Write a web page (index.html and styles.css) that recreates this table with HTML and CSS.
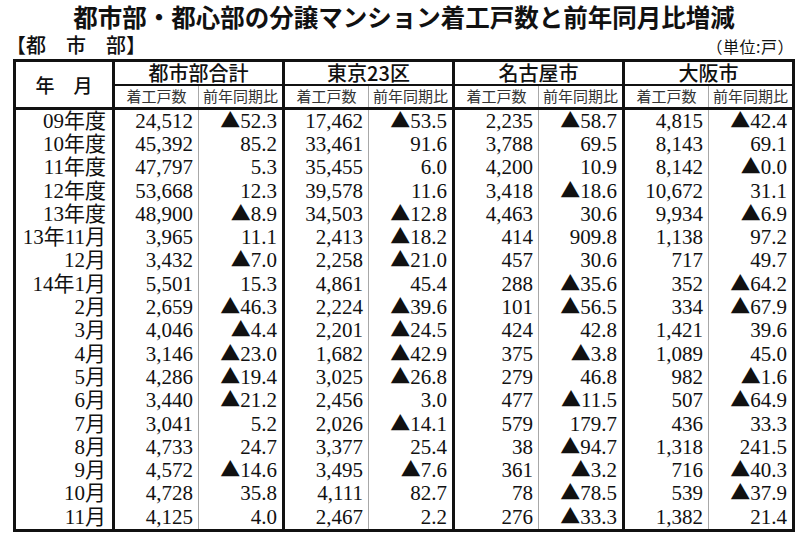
FILE: index.html
```html
<!DOCTYPE html>
<html lang="ja">
<head>
<meta charset="utf-8">
<title>都市部・都心部の分譲マンション着工戸数と前年同月比増減</title>
<link rel="stylesheet" href="styles.css">
</head>
<body>
<h1 class="title">都市部・都心部の分譲マンション着工戸数と前年同月比増減</h1>
<div class="sub">
  <span class="section">【都　市　部】</span>
  <span class="unit">（単位:戸）</span>
</div>
<table class="data">
  <colgroup>
    <col class="w-label">
    <col class="w-num"><col class="w-num"><col class="w-num"><col class="w-num">
    <col class="w-num"><col class="w-num"><col class="w-num"><col class="w-num">
  </colgroup>
  <thead>
    <tr class="h1">
      <th class="ym" rowspan="2">年　月</th>
      <th class="grp" colspan="2">都市部合計</th>
      <th class="grp" colspan="2">東京23区</th>
      <th class="grp" colspan="2">名古屋市</th>
      <th class="grp" colspan="2">大阪市</th>
    </tr>
    <tr class="h2">
      <th class="sh n">着工戸数</th><th class="sh r">前年同期比</th>
      <th class="sh n">着工戸数</th><th class="sh r">前年同期比</th>
      <th class="sh n">着工戸数</th><th class="sh r">前年同期比</th>
      <th class="sh n">着工戸数</th><th class="sh r">前年同期比</th>
    </tr>
  </thead>
  <tbody>
    <tr><td class="lb">09年度</td><td class="n">24,512</td><td class="r"><span class="tri">▲</span>52.3</td><td class="n">17,462</td><td class="r"><span class="tri">▲</span>53.5</td><td class="n">2,235</td><td class="r"><span class="tri">▲</span>58.7</td><td class="n">4,815</td><td class="r"><span class="tri">▲</span>42.4</td></tr>
    <tr><td class="lb">10年度</td><td class="n">45,392</td><td class="r">85.2</td><td class="n">33,461</td><td class="r">91.6</td><td class="n">3,788</td><td class="r">69.5</td><td class="n">8,143</td><td class="r">69.1</td></tr>
    <tr><td class="lb">11年度</td><td class="n">47,797</td><td class="r">5.3</td><td class="n">35,455</td><td class="r">6.0</td><td class="n">4,200</td><td class="r">10.9</td><td class="n">8,142</td><td class="r"><span class="tri">▲</span>0.0</td></tr>
    <tr><td class="lb">12年度</td><td class="n">53,668</td><td class="r">12.3</td><td class="n">39,578</td><td class="r">11.6</td><td class="n">3,418</td><td class="r"><span class="tri">▲</span>18.6</td><td class="n">10,672</td><td class="r">31.1</td></tr>
    <tr><td class="lb">13年度</td><td class="n">48,900</td><td class="r"><span class="tri">▲</span>8.9</td><td class="n">34,503</td><td class="r"><span class="tri">▲</span>12.8</td><td class="n">4,463</td><td class="r">30.6</td><td class="n">9,934</td><td class="r"><span class="tri">▲</span>6.9</td></tr>
    <tr><td class="lb">13年11月</td><td class="n">3,965</td><td class="r">11.1</td><td class="n">2,413</td><td class="r"><span class="tri">▲</span>18.2</td><td class="n">414</td><td class="r">909.8</td><td class="n">1,138</td><td class="r">97.2</td></tr>
    <tr><td class="lb">12月</td><td class="n">3,432</td><td class="r"><span class="tri">▲</span>7.0</td><td class="n">2,258</td><td class="r"><span class="tri">▲</span>21.0</td><td class="n">457</td><td class="r">30.6</td><td class="n">717</td><td class="r">49.7</td></tr>
    <tr><td class="lb">14年1月</td><td class="n">5,501</td><td class="r">15.3</td><td class="n">4,861</td><td class="r">45.4</td><td class="n">288</td><td class="r"><span class="tri">▲</span>35.6</td><td class="n">352</td><td class="r"><span class="tri">▲</span>64.2</td></tr>
    <tr><td class="lb">2月</td><td class="n">2,659</td><td class="r"><span class="tri">▲</span>46.3</td><td class="n">2,224</td><td class="r"><span class="tri">▲</span>39.6</td><td class="n">101</td><td class="r"><span class="tri">▲</span>56.5</td><td class="n">334</td><td class="r"><span class="tri">▲</span>67.9</td></tr>
    <tr><td class="lb">3月</td><td class="n">4,046</td><td class="r"><span class="tri">▲</span>4.4</td><td class="n">2,201</td><td class="r"><span class="tri">▲</span>24.5</td><td class="n">424</td><td class="r">42.8</td><td class="n">1,421</td><td class="r">39.6</td></tr>
    <tr><td class="lb">4月</td><td class="n">3,146</td><td class="r"><span class="tri">▲</span>23.0</td><td class="n">1,682</td><td class="r"><span class="tri">▲</span>42.9</td><td class="n">375</td><td class="r"><span class="tri">▲</span>3.8</td><td class="n">1,089</td><td class="r">45.0</td></tr>
    <tr><td class="lb">5月</td><td class="n">4,286</td><td class="r"><span class="tri">▲</span>19.4</td><td class="n">3,025</td><td class="r"><span class="tri">▲</span>26.8</td><td class="n">279</td><td class="r">46.8</td><td class="n">982</td><td class="r"><span class="tri">▲</span>1.6</td></tr>
    <tr><td class="lb">6月</td><td class="n">3,440</td><td class="r"><span class="tri">▲</span>21.2</td><td class="n">2,456</td><td class="r">3.0</td><td class="n">477</td><td class="r"><span class="tri">▲</span>11.5</td><td class="n">507</td><td class="r"><span class="tri">▲</span>64.9</td></tr>
    <tr><td class="lb">7月</td><td class="n">3,041</td><td class="r">5.2</td><td class="n">2,026</td><td class="r"><span class="tri">▲</span>14.1</td><td class="n">579</td><td class="r">179.7</td><td class="n">436</td><td class="r">33.3</td></tr>
    <tr><td class="lb">8月</td><td class="n">4,733</td><td class="r">24.7</td><td class="n">3,377</td><td class="r">25.4</td><td class="n">38</td><td class="r"><span class="tri">▲</span>94.7</td><td class="n">1,318</td><td class="r">241.5</td></tr>
    <tr><td class="lb">9月</td><td class="n">4,572</td><td class="r"><span class="tri">▲</span>14.6</td><td class="n">3,495</td><td class="r"><span class="tri">▲</span>7.6</td><td class="n">361</td><td class="r"><span class="tri">▲</span>3.2</td><td class="n">716</td><td class="r"><span class="tri">▲</span>40.3</td></tr>
    <tr><td class="lb">10月</td><td class="n">4,728</td><td class="r">35.8</td><td class="n">4,111</td><td class="r">82.7</td><td class="n">78</td><td class="r"><span class="tri">▲</span>78.5</td><td class="n">539</td><td class="r"><span class="tri">▲</span>37.9</td></tr>
    <tr><td class="lb">11月</td><td class="n">4,125</td><td class="r">4.0</td><td class="n">2,467</td><td class="r">2.2</td><td class="n">276</td><td class="r"><span class="tri">▲</span>33.3</td><td class="n">1,382</td><td class="r">21.4</td></tr>
  </tbody>
</table>
</body>
</html>
```
FILE: styles.css
```css
html, body {
  margin: 0;
  padding: 0;
  background: #ffffff;
}
body {
  width: 800px;
  color: #111111;
  font-family: "Noto Sans CJK JP", sans-serif;
}
.title {
  margin: 0;
  padding: 2px 0 0 8px;
  height: 30px;
  line-height: 30px;
  font-size: 24.5px;
  font-weight: 700;
  text-align: center;
  white-space: nowrap;
}
.sub {
  display: flex;
  justify-content: space-between;
  align-items: baseline;
  height: 27px;
  padding: 0 6px 0 6px;
}
.section {
  font-size: 20px;
  line-height: 26px;
  font-weight: 500;
}
.unit {
  font-size: 16px;
  line-height: 20px;
  letter-spacing: 0.5px;
}
.data {
  border-collapse: collapse;
  table-layout: fixed;
  width: 779px;
  margin-left: 13px;
  border: 3px solid #111111;
}
.w-label { width: 99px; }
.w-num { width: 85px; }
.data th, .data td {
  padding: 0;
  white-space: nowrap;
}
.h1 { height: 24px; }
.h2 { height: 23px; }
.ym {
  font-size: 19px;
  font-weight: 500;
  text-align: center;
  border-bottom: 3px solid #111111;
}
.grp {
  font-size: 20px;
  font-weight: 500;
  line-height: 22px;
  text-align: center;
  border-left: 3px solid #111111;
  border-bottom: 2px solid #111111;
}
.sh {
  font-size: 15px;
  font-weight: 400;
  line-height: 20px;
  color: #333333;
  text-align: center;
  border-bottom: 3px solid #111111;
}
.sh.n { border-left: 3px solid #111111; }
.sh.r { border-left: 1px solid #a8a8a8; }
.data tbody tr { height: 23.3px; }
.data td {
  font-family: "Liberation Serif", "Noto Sans CJK JP", serif;
  font-size: 21px;
  line-height: 23px;
  height: 23.3px;
  text-align: right;
  padding-right: 5px;
}
.data td.lb { padding-right: 6px; }
.data td.n { border-left: 3px solid #111111; }
.data td.r { border-left: 1px solid #a8a8a8; }
.tri {
  font-family: "Noto Sans CJK JP", sans-serif;
  font-size: 20px;
  line-height: 20px;
}
```
